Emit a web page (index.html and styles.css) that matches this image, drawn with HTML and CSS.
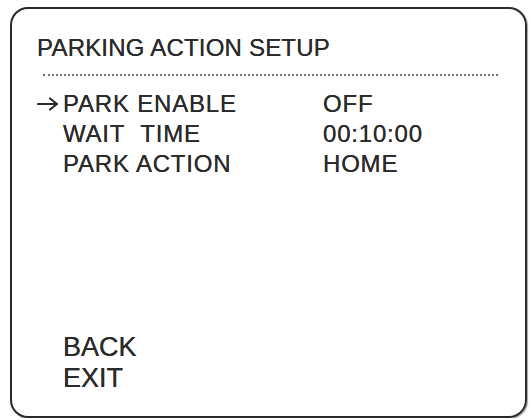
FILE: index.html
```html
<!DOCTYPE html>
<html>
<head>
<meta charset="utf-8">
<link rel="stylesheet" href="styles.css">
</head>
<body>
<div class="frame">
  <div class="title">PARKING ACTION SETUP</div>
  <div class="rule"></div>
  <div class="rows">
    <div class="row"><span class="arrow"><svg class="arrow-icon" viewBox="0 0 22 14" width="22" height="14"><path d="M1 7 H20 M13 1.5 L20 7 L13 12.5" fill="none" stroke="#2b2b2b" stroke-width="2.2" stroke-linecap="round" stroke-linejoin="round"/></svg></span><span class="label">PARK ENABLE</span><span class="value">OFF</span></div>
    <div class="row"><span class="arrow"></span><span class="label">WAIT&nbsp;&nbsp;TIME</span><span class="value">00:10:00</span></div>
    <div class="row"><span class="arrow"></span><span class="label">PARK ACTION</span><span class="value">HOME</span></div>
  </div>
  <div class="bottom">
    <div class="cmd">BACK</div>
    <div class="cmd">EXIT</div>
  </div>
</div>
</body>
</html>
```
FILE: styles.css
```css
html, body {
  margin: 0;
  padding: 0;
  background: #ffffff;
}
body {
  font-family: "Liberation Sans", Arial, sans-serif;
  color: #2b2b2b;
}
.frame {
  box-sizing: border-box;
  margin: 7px 4px 0 10px;
  width: 517px;
  height: 411px;
  border: 2.5px solid #2a2a2a;
  border-radius: 18px;
  box-shadow: 1px 1px 1px rgba(0,0,0,0.35);
  display: flex;
  flex-direction: column;
  padding: 25px 26px 22px 24px;
}
.title {
  font-size: 24px;
  line-height: 28px;
  padding-left: 1px;
  letter-spacing: 0.2px;
  text-shadow: 0 0 0.5px #2b2b2b;
}
.rule {
  margin: 12px 0 0 7px;
  width: 455px;
  height: 0;
  border-top: 2px dotted #707070;
}
.rows {
  margin-top: 13px;
  display: flex;
  flex-direction: column;
}
.row {
  display: flex;
  align-items: baseline;
  font-size: 24px;
  line-height: 30px;
  letter-spacing: 0.8px;
  text-shadow: 0 0 0.5px #2b2b2b;
}
.arrow {
  width: 27px;
  flex: none;
  align-self: center;
  display: flex;
  align-items: center;
  padding-left: 1px;
  box-sizing: border-box;
}
.arrow-icon {
  display: block;
}
.label {
  width: 260px;
  flex: none;
}
.bottom {
  margin-top: auto;
  padding-left: 27px;
}
.cmd {
  font-size: 27px;
  line-height: 31px;
  text-shadow: 0 0 0.5px #2b2b2b;
}
```
